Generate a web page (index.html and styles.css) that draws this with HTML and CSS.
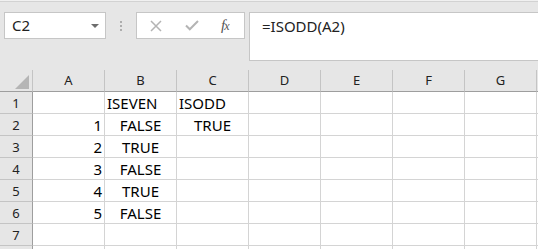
FILE: index.html
```html
<!DOCTYPE html>
<html lang="en">
  <head>
    <meta charset="UTF-8" />
    <title>ISODD</title>
    <link rel="stylesheet" href="styles.css">
  </head>
  <body>
    <div class="formula-row">
      <div class="name-box">
        <span>C2</span>
        <span class="caret"></span>
      </div>
      <div class="grip"><i></i><i></i><i></i></div>
      <div class="fn-buttons">
        <svg class="icon-x" width="12" height="12" viewBox="0 0 12 12">
          <path d="M1 1 L11 11 M11 1 L1 11" stroke="#b4b4b4" stroke-width="1.5" fill="none" />
        </svg>
        <svg class="icon-ok" width="14" height="11" viewBox="0 0 14 11">
          <path d="M1 5.5 L4.8 9.3 L13 1" stroke="#b4b4b4" stroke-width="2" fill="none" />
        </svg>
        <span class="fx">f<span>x</span></span>
      </div>
      <div class="formula-input">=ISODD(A2)</div>
    </div>

    <div class="sheet">
      <div class="corner"><span class="tri"></span></div>
      <div class="col-head">A</div>
      <div class="col-head">B</div>
      <div class="col-head">C</div>
      <div class="col-head">D</div>
      <div class="col-head">E</div>
      <div class="col-head">F</div>
      <div class="col-head">G</div>
      <div class="col-head"></div>

      <div class="row-head">1</div>
      <div class="cell"></div>
      <div class="cell">ISEVEN</div>
      <div class="cell">ISODD</div>
      <div class="cell"></div><div class="cell"></div><div class="cell"></div><div class="cell"></div><div class="cell"></div>

      <div class="row-head">2</div>
      <div class="cell num">1</div>
      <div class="cell bool">FALSE</div>
      <div class="cell bool">TRUE</div>
      <div class="cell"></div><div class="cell"></div><div class="cell"></div><div class="cell"></div><div class="cell"></div>

      <div class="row-head">3</div>
      <div class="cell num">2</div>
      <div class="cell bool">TRUE</div>
      <div class="cell"></div>
      <div class="cell"></div><div class="cell"></div><div class="cell"></div><div class="cell"></div><div class="cell"></div>

      <div class="row-head">4</div>
      <div class="cell num">3</div>
      <div class="cell bool">FALSE</div>
      <div class="cell"></div>
      <div class="cell"></div><div class="cell"></div><div class="cell"></div><div class="cell"></div><div class="cell"></div>

      <div class="row-head">5</div>
      <div class="cell num">4</div>
      <div class="cell bool">TRUE</div>
      <div class="cell"></div>
      <div class="cell"></div><div class="cell"></div><div class="cell"></div><div class="cell"></div><div class="cell"></div>

      <div class="row-head">6</div>
      <div class="cell num">5</div>
      <div class="cell bool">FALSE</div>
      <div class="cell"></div>
      <div class="cell"></div><div class="cell"></div><div class="cell"></div><div class="cell"></div><div class="cell"></div>

      <div class="row-head">7</div>
      <div class="cell"></div><div class="cell"></div><div class="cell"></div>
      <div class="cell"></div><div class="cell"></div><div class="cell"></div><div class="cell"></div><div class="cell"></div>

      <div class="row-head"></div>
      <div class="cell"></div><div class="cell"></div><div class="cell"></div>
      <div class="cell"></div><div class="cell"></div><div class="cell"></div><div class="cell"></div><div class="cell"></div>
    </div>
  </body>
</html>
```

FILE: styles.css
```css
html,
body {
  margin: 0;
  height: 100%;
  overflow: hidden;
}
body {
  font-family: "Noto Sans", "Open Sans", sans-serif;
  background-color: #e6e6e6;
  color: #222;
  border-top: 1px solid #f0f0f0;
}
.formula-row {
  display: flex;
  align-items: flex-start;
  height: 58px;
  padding-top: 10px;
  border-top: 1px solid #d2d2d2;
}
.name-box {
  box-sizing: border-box;
  display: flex;
  align-items: center;
  justify-content: space-between;
  width: 102px;
  height: 27px;
  margin-left: 4px;
  padding: 0 6px 0 7px;
  background-color: #fff;
  border: 1px solid #c6c6c6;
  font-size: 15px;
  line-height: 25px;
}
.caret {
  width: 0;
  height: 0;
  border-left: 4px solid transparent;
  border-right: 4px solid transparent;
  border-top: 4px solid #6d6d6d;
}
.grip {
  display: flex;
  flex-direction: column;
  gap: 2px;
  margin: 9px 0 0 14px;
}
.grip i {
  display: block;
  width: 2px;
  height: 2px;
  background-color: #adadad;
}
.fn-buttons {
  box-sizing: border-box;
  display: flex;
  align-items: center;
  width: 109px;
  height: 27px;
  margin-left: 14px;
  padding-left: 13px;
  background-color: #fff;
  border: 1px solid #c6c6c6;
}
.icon-ok {
  margin-left: 23px;
}
.fx {
  margin-left: 22px;
  font-family: "Liberation Serif", serif;
  font-style: italic;
  font-size: 15px;
  color: #555;
  letter-spacing: -1px;
}
.fx span {
  font-size: 12px;
}
.formula-input {
  box-sizing: border-box;
  flex: 1;
  height: 49px;
  margin: 0 -2px 0 4px;
  padding: 3px 0 0 12px;
  background-color: #fff;
  border: 1px solid #c6c6c6;
  font-size: 15px;
  line-height: 20px;
}
.sheet {
  display: grid;
  grid-template-columns: 33px repeat(8, 72px);
  grid-auto-rows: 22px;
  background-color: #fff;
}
.sheet > div {
  box-sizing: border-box;
  border-right: 1px solid #d4d4d4;
  border-bottom: 1px solid #d4d4d4;
  white-space: nowrap;
  overflow: hidden;
}
.corner,
.col-head,
.row-head {
  background-color: #e6e6e6;
}
.sheet > .corner {
  position: relative;
  border-right-color: #c4c4c4;
  border-bottom-color: #9e9e9e;
}
.tri {
  position: absolute;
  right: 3px;
  bottom: 2px;
  width: 0;
  height: 0;
  border-left: 14px solid transparent;
  border-bottom: 14px solid #b5b5b5;
}
.sheet > .col-head {
  text-align: center;
  font-size: 13px;
  line-height: 20px;
  color: #222;
  border-right-color: #c4c4c4;
  border-bottom-color: #9e9e9e;
}
.sheet > .row-head {
  text-align: center;
  font-size: 13px;
  line-height: 22px;
  color: #222;
  border-right-color: #9e9e9e;
  border-bottom-color: #c4c4c4;
}
.cell {
  padding: 1px 2px 0;
  font-size: 15px;
  line-height: 20px;
  color: #000;
}
.num {
  text-align: right;
}
.bool {
  text-align: center;
}
```
